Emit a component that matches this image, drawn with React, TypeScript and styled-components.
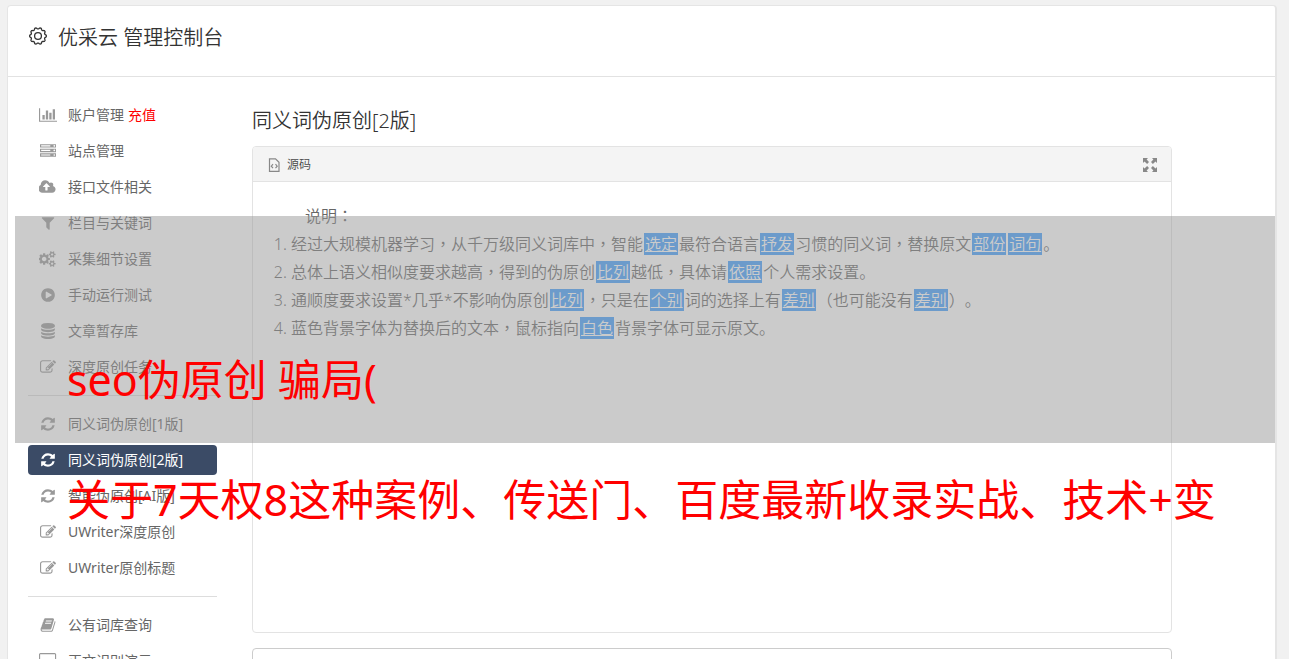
import React from "react";
import styled, { createGlobalStyle } from "styled-components";

const GlobalStyle = createGlobalStyle`
  * { box-sizing: border-box; }
  html, body { margin: 0; height: 100%; }
  body {
    overflow: hidden;
    background: #f1f1f1;
    color: #666;
    font-family: "Noto Sans", "Noto Sans CJK SC", sans-serif;
    font-size: 14px;
    text-spacing-trim: space-all;
  }
  #root { height: 100%; }
`;

const Page = styled.div`
  position: relative;
  height: 100%;
  overflow: hidden;
  padding: 5px 12px 0 7px;
`;

const Card = styled.div`
  min-height: 100%;
  background: #fff;
  border: 1px solid #e5e5e5;
  border-right-width: 2px;
  border-radius: 4px 4px 0 0;
`;

const Header = styled.header`
  display: flex;
  align-items: center;
  gap: 10px;
  height: 71px;
  padding: 0 20px 10px;
  border-bottom: 1px solid #e2e2e2;
  color: #333;
`;

const Title = styled.h1`
  margin: 0;
  padding-top: 4px;
  font-size: 20px;
  line-height: 28px;
  font-weight: 350;
`;

const Body = styled.div`
  display: flex;
  align-items: flex-start;
  padding: 23px 103px 0 20px;
`;

const Sidebar = styled.nav`
  flex: 0 0 189px;
  margin-right: 35px;
`;

const NavList = styled.ul`
  display: flex;
  flex-direction: column;
  gap: 6px;
  margin: 0;
  padding: 0;
  list-style: none;

  & + & {
    margin-top: 13px;
    padding-top: 13px;
    border-top: 1px solid #ddd;
  }
`;

const NavLink = styled.a<{ $active?: boolean }>`
  display: flex;
  align-items: center;
  height: 30px;
  padding-left: 10px;
  border-radius: 4px;
  line-height: 30px;
  white-space: nowrap;
  text-decoration: none;
  color: ${(p) => (p.$active ? "#fff" : "#666")};
  background: ${(p) => (p.$active ? "#3b4b66" : "transparent")};

  svg {
    fill: ${(p) => (p.$active ? "#fff" : "#999")};
  }
`;

const IconSlot = styled.span`
  display: flex;
  justify-content: center;
  width: 20px;
  margin-right: 10px;
`;

const Recharge = styled.span`
  margin-left: 4px;
  color: #f00;
`;

const Main = styled.main`
  flex: 1;
  min-width: 0;
`;

const Heading = styled.h2`
  margin: 6px 0 10px;
  color: #333;
  font-size: 20px;
  font-weight: 350;
  line-height: 30px;
`;

const Panel = styled.section`
  height: 487px;
  margin-bottom: 15px;
  border: 1px solid #e3e3e3;
  border-radius: 4px;
`;

const Toolbar = styled.div`
  display: flex;
  align-items: center;
  justify-content: space-between;
  height: 35px;
  padding: 2px 14px 0;
  background: #f4f4f4;
  border-bottom: 1px solid #e3e3e3;
  border-radius: 3px 3px 0 0;
`;

const ToolButton = styled.button`
  display: flex;
  align-items: center;
  gap: 6px;
  padding: 0;
  border: 0;
  background: none;
  color: #484848;
  font: inherit;
  font-size: 12px;
  font-weight: 350;
  line-height: 18px;
`;

const Article = styled.article`
  padding: 20px;
  color: #666;
  font-size: 16px;
  font-weight: 350;
  line-height: 28px;
`;

const Lead = styled.p`
  margin: 0;
  padding-left: 32px;
`;

const Steps = styled.ol`
  margin: 0;
  padding-left: 18px;
  white-space: nowrap;
`;

const Swap = styled.span`
  margin: 0 1px;
  padding: 0 1px;
  background: #409eff;
  color: #fff;
  text-decoration: underline;
`;

/* Commas and colons sit in the middle of their cell. */
const Centred = styled.span`
  font-family: "Noto Sans CJK TC", sans-serif;
  line-height: 16px;
`;

const Result = styled.textarea`
  display: block;
  width: 100%;
  height: 200px;
  border: 1px solid #ccc;
  border-radius: 4px;
  background: #fff;
  resize: none;
`;

const Shade = styled.div`
  position: absolute;
  top: 216px;
  left: 15px;
  right: 14px;
  height: 227px;
  background: rgba(151, 151, 151, 0.5);
`;

const Caption = styled.div`
  position: absolute;
  top: 320px;
  left: 67px;
  color: #f00;
  font-size: 43px;
  line-height: 120px;
  white-space: nowrap;
`;

const lowerCog =
  "v140q0 16-149 31-12 27-30 52 51 113 51 138 0 4-4 7-122 71-124 71-8 0-46-47t-52-68q-20 2-30 2t-30-2q-14 21-52 68t-46 47q-2 0-124-71-4-3-4-7 0-25 51-138-18-25-30-52-149-15-149-31v-140q0-16 149-31 13-29 30-52-51-113-51-138 0-4 4-7 4-2 35-20t59-34 30-16q8 0 46 46.5t52 67.5q20-2 30-2t30 2q51-71 92-112l6-2q4 0 124 70 4 3 4 7 0 25-51 138 17 23 30 52 149 15 149 31z";
const smallHole = "q0-52-38-90t-90-38-90 38-38 90q0 53 37.5 90.5t90.5 37.5 90.5-37.5 37.5-90.5z";

const icons = {
  chart: [2048, "M640 896v512h-256v-512h256zm384-512v1024h-256v-1024h256zm1024 1152v128h-2048v-1536h128v1408h1920zm-640-896v768h-256v-768h256zm384-384v1152h-256v-1152h256z"],
  server: [1792, "M128 1408h1024v-128h-1024v128zm0-512h1024v-128h-1024v128zm1568 448q0-40-28-68t-68-28-68 28-28 68 28 68 68 28 68-28 28-68zm-1568-960h1024v-128h-1024v128zm1568 448q0-40-28-68t-68-28-68 28-28 68 28 68 68 28 68-28 28-68zm0-512q0-40-28-68t-68-28-68 28-28 68 28 68 68 28 68-28 28-68zm96 832v384h-1792v-384h1792zm0-512v384h-1792v-384h1792zm0-512v384h-1792v-384h1792z"],
  cloud: [1920, "M1216 864q0-14-9-23l-352-352q-9-9-23-9t-23 9l-351 351q-10 12-10 24 0 14 9 23t23 9h224v352q0 13 9.5 22.5t22.5 9.5h192q13 0 22.5-9.5t9.5-22.5v-352h224q13 0 22.5-9.5t9.5-22.5zm640 288q0 159-112.5 271.5t-271.5 112.5h-1088q-185 0-316.5-131.5t-131.5-316.5q0-130 70-240t188-165q-2-30-2-43 0-212 150-362t362-150q156 0 285.5 87t188.5 231q71-62 166-62 106 0 181 75t75 181q0 76-41 138 130 31 213.5 135.5t83.5 238.5z"],
  filter: [1792, "M1595 295q17 41-14 70l-493 493v742q0 42-39 59-13 5-25 5-27 0-45-19l-256-256q-19-19-19-45v-486l-493-493q-31-29-14-70 17-39 59-39h1280q42 0 59 39z"],
  cogs: [1920, `M832 896q0-106-75-181t-181-75-181 75-75 181 75 181 181 75 181-75 75-181zM1600 1408${smallHole}M1600 384${smallHole}M1216 805v185q0 10-7 19.5t-16 10.5l-155 24q-11 35-32 76 34 48 90 115 7 11 7 20 0 12-7 19-23 30-82.5 89.5t-78.5 59.5q-11 0-21-7l-115-90q-37 19-77 31-11 108-23 155-7 24-30 24h-186q-11 0-20-7.5t-10-17.5l-23-153q-34-10-75-31l-118 89q-7 7-20 7-11 0-21-8-144-133-144-160 0-9 7-19 10-14 41-53t47-61q-23-44-35-82l-152-24q-10-1-17-9.5t-7-19.5v-185q0-10 7-19.5t16-10.5l155-24q11-35 32-76-34-48-90-115-7-11-7-20 0-12 7-20 22-30 82-89t79-59q11 0 21 7l115 90q34-18 77-32 11-108 23-154 7-24 30-24h186q11 0 20 7.5t10 17.5l23 153q34 10 75 31l118-89q8-7 20-7 11 0 21 8 144 133 144 160 0 8-7 19-12 16-42 54t-45 60q23 48 34 82l152 23q10 2 17 10.5t7 19.5zM1856 1338${lowerCog}M1856 314${lowerCog}`],
  play: [1792, "M896 128q209 0 385.5 103t279.5 279.5 103 385.5-103 385.5-279.5 279.5-385.5 103-385.5-103-279.5-279.5-103-385.5 103-385.5 279.5-279.5 385.5-103zm384 823q32-18 32-55t-32-55l-544-320q-31-19-64-1-32 19-32 56v640q0 37 32 56 16 8 32 8 17 0 32-9z"],
  database: [1792, "M896 768q237 0 443-43t325-127v170q0 69-103 128t-280 93.5-385 34.5-385-34.5-280-93.5-103-128v-170q119 84 325 127t443 43zm0 768q237 0 443-43t325-127v170q0 69-103 128t-280 93.5-385 34.5-385-34.5-280-93.5-103-128v-170q119 84 325 127t443 43zm0-384q237 0 443-43t325-127v170q0 69-103 128t-280 93.5-385 34.5-385-34.5-280-93.5-103-128v-170q119 84 325 127t443 43zm0-1152q208 0 385 34.5t280 93.5 103 128v128q0 69-103 128t-280 93.5-385 34.5-385-34.5-280-93.5-103-128v-128q0-69 103-128t280-93.5 385-34.5z"],
  edit: [1792, "M888 1184l116-116-152-152-116 116v56h96v96h56zm440-720q-16-16-33 1l-350 350q-17 17-1 33t33-1l350-350q17-17 1-33zm80 594v190q0 119-84.5 203.5t-203.5 84.5h-832q-119 0-203.5-84.5t-84.5-203.5v-832q0-119 84.5-203.5t203.5-84.5h832q63 0 117 25 15 7 18 23 3 17-9 29l-49 49q-14 14-32 8-23-6-45-6h-832q-66 0-113 47t-47 113v832q0 66 47 113t113 47h832q66 0 113-47t47-113v-126q0-13 9-22l64-64q15-15 35-7t20 29zm-96-738l288 288-672 672h-288v-288zm444 132l-92 92-288-288 92-92q28-28 68-28t68 28l152 152q28 28 28 68t-28 68z"],
  refresh: [1792, "M1639 1056q0 5-1 7-64 268-268 434.5t-478 166.5q-146 0-282.5-55t-243.5-157l-129 129q-19 19-45 19t-45-19-19-45v-448q0-26 19-45t45-19h448q26 0 45 19t19 45-19 45l-137 137q71 66 161 102t187 36q134 0 250-65t186-179q11-17 53-117 8-23 30-23h192q13 0 22.5 9.5t9.5 22.5zm25-800v448q0 26-19 45t-45 19h-448q-26 0-45-19t-19-45 19-45l138-138q-148-137-349-137-134 0-250 65t-186 179q-11 17-53 117-8 23-30 23h-199q-13 0-22.5-9.5t-9.5-22.5v-7q65-268 270-434.5t480-166.5q146 0 284 55.5t245 156.5l130-129q19-19 45-19t45 19 19 45z"],
  book: [1792, "M1703 478q40 57 18 129l-275 906q-19 64-76.5 107.5t-122.5 43.5h-923q-77 0-148.5-53.5t-99.5-131.5q-24-67-2-127 0-4 3-27t4-37q1-8-3-21.5t-3-19.5q2-11 8-21t16.5-23.5 16.5-23.5q23-38 45-91.5t30-91.5q3-10 .5-30t-.5-28q3-11 17-28t17-23q21-36 42-92t25-90q1-9-2.5-32t.5-28q4-13 22-30.5t22-22.5q19-26 42.5-84.5t27.5-96.5q1-8-3-25.5t-2-26.5q2-8 9-18t18-23 17-21q8-12 16.5-30.5t15-35 16-36 19.5-32 26.5-23.5 36-11.5 47.5 5.5l-1 3q38-9 51-9h761q74 0 114 56t18 130l-274 906q-36 119-71.5 153.5t-128.5 34.5h-869q-27 0-38 15-11 16-1 43 24 70 144 70h923q29 0 56-15.5t35-41.5l300-987q7-22 5-57 38 15 59 43zm-1064 2q-4 13 2 22.5t20 9.5h608q13 0 25.5-9.5t16.5-22.5l21-64q4-13-2-22.5t-20-9.5h-608q-13 0-25.5 9.5t-16.5 22.5zm-83 256q-4 13 2 22.5t20 9.5h608q13 0 25.5-9.5t16.5-22.5l21-64q4-13-2-22.5t-20-9.5h-608q-13 0-25.5 9.5t-16.5 22.5z"],
  desktop: [1920, "M1792 992v-832q0-13-9.5-22.5t-22.5-9.5h-1600q-13 0-22.5 9.5t-9.5 22.5v832q0 13 9.5 22.5t22.5 9.5h1600q13 0 22.5-9.5t9.5-22.5zm128-832v1088q0 66-47 113t-113 47h-544q0 37 16 77.5t32 71 16 43.5q0 26-19 45t-45 19h-512q-26 0-45-19t-19-45q0-14 16-44t32-70 16-78h-544q-66 0-113-47t-47-113v-1088q0-66 47-113t113-47h1600q66 0 113 47t47 113z"],
} as const;

type IconName = keyof typeof icons;

function Icon({ name }: { name: IconName }) {
  const [width, path] = icons[name];
  return (
    <svg width={(width / 1792) * 16} height="16" viewBox={`0 0 ${width} 1792`} aria-hidden="true">
      <path d={path} />
    </svg>
  );
}

/* Outline of a gear with ten shallow teeth, centred in a 20 by 20 box. */
function gearOutline() {
  const points: string[] = [];
  for (let i = 0; i <= 180; i++) {
    const a = (i / 180) * Math.PI * 2;
    const r = 7.7 + 0.7 * Math.tanh(1.6 * Math.cos(10 * a + Math.PI));
    points.push(`${(10 + r * Math.sin(a)).toFixed(2)} ${(10 - r * Math.cos(a)).toFixed(2)}`);
  }
  return `M${points.join("L")}Z`;
}

type Item = { label: string; icon: IconName; active?: boolean; note?: string };

const groups: Item[][] = [
  [
    { label: "账户管理", icon: "chart", note: "充值" },
    { label: "站点管理", icon: "server" },
    { label: "接口文件相关", icon: "cloud" },
    { label: "栏目与关键词", icon: "filter" },
    { label: "采集细节设置", icon: "cogs" },
    { label: "手动运行测试", icon: "play" },
    { label: "文章暂存库", icon: "database" },
    { label: "深度原创任务", icon: "edit" },
  ],
  [
    { label: "同义词伪原创[1版]", icon: "refresh" },
    { label: "同义词伪原创[2版]", icon: "refresh", active: true },
    { label: "智能伪原创[AI版]", icon: "refresh" },
    { label: "UWriter深度原创", icon: "edit" },
    { label: "UWriter原创标题", icon: "edit" },
  ],
  [
    { label: "公有词库查询", icon: "book" },
    { label: "正文识别演示", icon: "desktop" },
  ],
];

const Comma = () => <Centred>，</Centred>;

export default function App() {
  return (
    <Page>
      <GlobalStyle />
      <Card>
        <Header>
          <svg width="20" height="20" viewBox="0 0 20 20" fill="none" stroke="#333" strokeWidth="1.3" aria-hidden="true">
            <path d={gearOutline()} />
            <circle cx="10" cy="10" r="3.4" />
          </svg>
          <Title>优采云 管理控制台</Title>
        </Header>
        <Body>
          <Sidebar>
            {groups.map((group, i) => (
              <NavList key={i}>
                {group.map((item) => (
                  <li key={item.label}>
                    <NavLink href="#" $active={item.active}>
                      <IconSlot>
                        <Icon name={item.icon} />
                      </IconSlot>
                      {item.label}
                      {item.note && <Recharge>{item.note}</Recharge>}
                    </NavLink>
                  </li>
                ))}
              </NavList>
            ))}
          </Sidebar>
          <Main>
            <Heading>同义词伪原创[2版]</Heading>
            <Panel>
              <Toolbar>
                <ToolButton type="button">
                  <svg width="14" height="14" viewBox="0 0 14 14" fill="none" stroke="#888" strokeWidth="1.2" aria-hidden="true">
                    <path d="M2.5 .8h6L12 4.3v9H2.5zM6 6.2L4.3 8.2 6 10.2M8.5 6.2l1.7 2-1.7 2" />
                  </svg>
                  源码
                </ToolButton>
                <ToolButton type="button" aria-label="全屏">
                  <svg width="14" height="14" viewBox="0 0 14 14" fill="#888" aria-hidden="true">
                    <path d="M0 0h5L3.600 1.500 6 4.100 4.100 6 1.500 3.600 0 5zM14 0v5l-1.500-1.400L9.900 6 8 4.100l2.400-2.600L9 0zM0 14V9l1.500 1.400L4.100 8 6 9.900l-2.400 2.600L5 14zM14 14H9l1.400-1.500L8 9.900 9.900 8l2.600 2.400L14 9z" />
                  </svg>
                </ToolButton>
              </Toolbar>
              <Article>
                <Lead>
                  说明<Centred>：</Centred>
                </Lead>
                <Steps>
                  <li>
                    经过大规模机器学习<Comma />从千万级同义词库中<Comma />智能<Swap>选定</Swap>最符合语言<Swap>抒发</Swap>习惯的同义词<Comma />替换原文<Swap>部份</Swap><Swap>词句</Swap>。
                  </li>
                  <li>
                    总体上语义相似度要求越高<Comma />得到的伪原创<Swap>比列</Swap>越低<Comma />具体请<Swap>依照</Swap>个人需求设置。
                  </li>
                  <li>
                    通顺度要求设置*几乎*不影响伪原创<Swap>比列</Swap><Comma />只是在<Swap>个别</Swap>词的选择上有<Swap>差别</Swap>（也可能没有<Swap>差别</Swap>）。
                  </li>
                  <li>
                    蓝色背景字体为替换后的文本<Comma />鼠标指向<Swap>白色</Swap>背景字体可显示原文。
                  </li>
                </Steps>
              </Article>
            </Panel>
            <Result aria-label="结果" />
          </Main>
        </Body>
      </Card>
      <Shade />
      <Caption>
        seo伪原创 骗局(
        <br />
        关于7天权8这种案例、传送门、百度最新收录实战、技术+变
      </Caption>
    </Page>
  );
}
